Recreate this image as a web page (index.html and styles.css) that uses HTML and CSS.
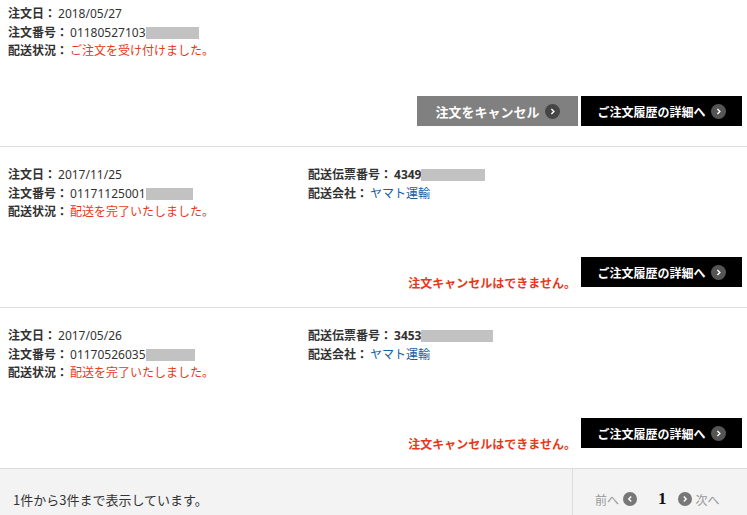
FILE: index.html
```html
<!DOCTYPE html>
<html lang="ja">
<head>
  <meta charset="UTF-8" />
  <meta name="viewport" content="width=device-width, initial-scale=1" />
  <title>ご注文履歴</title>
  <link rel="stylesheet" href="styles.css">
</head>
<body>
  <div class="orders">
    <div class="order order-first">
      <div class="order-info">
        <div class="info-col">
          <div class="info-row"><span class="label">注文日：</span><span class="value">2018/05/27</span></div>
          <div class="info-row"><span class="label">注文番号：</span><span class="value">01180527103</span><span class="mask mask-53"></span></div>
          <div class="info-row"><span class="label">配送状況：</span><span class="value status">ご注文を受け付けました。</span></div>
        </div>
      </div>
      <div class="order-actions">
        <a class="btn btn-cancel" href="#">注文をキャンセル
          <svg class="arrow" viewBox="0 0 15 15"><circle cx="7.5" cy="7.5" r="7.5"/><path d="M6.4 5 8.9 7.5 6.4 10"/></svg>
        </a>
        <a class="btn btn-detail" href="#">ご注文履歴の詳細へ
          <svg class="arrow" viewBox="0 0 15 15"><circle cx="7.5" cy="7.5" r="7.5"/><path d="M6.4 5 8.9 7.5 6.4 10"/></svg>
        </a>
      </div>
    </div>

    <div class="order">
      <div class="order-info">
        <div class="info-col">
          <div class="info-row"><span class="label">注文日：</span><span class="value">2017/11/25</span></div>
          <div class="info-row"><span class="label">注文番号：</span><span class="value">01171125001</span><span class="mask mask-47"></span></div>
          <div class="info-row"><span class="label">配送状況：</span><span class="value status">配送を完了いたしました。</span></div>
        </div>
        <div class="info-col">
          <div class="info-row"><span class="label">配送伝票番号：</span><span class="value strong">4349</span><span class="mask mask-64"></span></div>
          <div class="info-row"><span class="label">配送会社：</span><a class="value carrier" href="#">ヤマト運輸</a></div>
        </div>
      </div>
      <div class="order-actions">
        <p class="cancel-note">注文キャンセルはできません。</p>
        <a class="btn btn-detail" href="#">ご注文履歴の詳細へ
          <svg class="arrow" viewBox="0 0 15 15"><circle cx="7.5" cy="7.5" r="7.5"/><path d="M6.4 5 8.9 7.5 6.4 10"/></svg>
        </a>
      </div>
    </div>

    <div class="order">
      <div class="order-info">
        <div class="info-col">
          <div class="info-row"><span class="label">注文日：</span><span class="value">2017/05/26</span></div>
          <div class="info-row"><span class="label">注文番号：</span><span class="value">01170526035</span><span class="mask mask-49"></span></div>
          <div class="info-row"><span class="label">配送状況：</span><span class="value status">配送を完了いたしました。</span></div>
        </div>
        <div class="info-col">
          <div class="info-row"><span class="label">配送伝票番号：</span><span class="value strong">3453</span><span class="mask mask-72"></span></div>
          <div class="info-row"><span class="label">配送会社：</span><a class="value carrier" href="#">ヤマト運輸</a></div>
        </div>
      </div>
      <div class="order-actions">
        <p class="cancel-note">注文キャンセルはできません。</p>
        <a class="btn btn-detail" href="#">ご注文履歴の詳細へ
          <svg class="arrow" viewBox="0 0 15 15"><circle cx="7.5" cy="7.5" r="7.5"/><path d="M6.4 5 8.9 7.5 6.4 10"/></svg>
        </a>
      </div>
    </div>
  </div>

  <div class="pager-bar">
    <div class="pager-count">1件から3件まで表示しています。</div>
    <div class="pager-nav">
      <span class="pager-link">前へ</span>
      <svg class="pager-arrow" viewBox="0 0 14 14"><circle cx="7" cy="7" r="7"/><path d="M8.2 4.6 5.8 7 8.2 9.4"/></svg>
      <span class="pager-current">1</span>
      <svg class="pager-arrow" viewBox="0 0 14 14"><circle cx="7" cy="7" r="7"/><path d="M5.8 4.6 8.2 7 5.8 9.4"/></svg>
      <span class="pager-link">次へ</span>
    </div>
  </div>
</body>
</html>
```

FILE: styles.css
```css
body {
  margin: 0;
  font-family: "Noto Sans", "Noto Sans CJK JP", sans-serif;
  font-size: 12px;
  color: #333;
  background-color: #fff;
  overflow: hidden;
}

.order {
  border-bottom: 1px solid #ddd;
  padding: 19px 5px 20px 8px;
}

/* the list is scrolled a little, so the first row is cut at the top */
.order-first {
  margin-top: -14px;
}

.order-info {
  display: grid;
  grid-template-columns: 300px auto;
  height: 53px;
}

.info-row {
  display: flex;
  align-items: center;
  line-height: 18.5px;
  white-space: nowrap;
}

.label {
  font-weight: bold;
}

.value {
  margin-left: 2px;
}

.value.strong {
  font-weight: bold;
}

.status {
  color: #e8381a;
}

.carrier {
  color: #17609f;
  text-decoration: none;
}

.mask {
  display: inline-block;
  height: 12px;
  background-color: #c2c2c2;
}

.mask-47 { width: 47px; }
.mask-49 { width: 49px; }
.mask-53 { width: 53px; }
.mask-64 { width: 64px; }
.mask-72 { width: 72px; }

.order-actions {
  display: flex;
  justify-content: flex-end;
  align-items: flex-end;
  gap: 3px;
  margin-top: 38px;
}

.btn {
  display: flex;
  justify-content: center;
  align-items: center;
  gap: 5px;
  width: 161px;
  height: 30px;
  color: #fff;
  font-weight: bold;
  text-decoration: none;
  font-family: "Noto Sans CJK JP", sans-serif;
}

.btn-cancel {
  background-color: #808080;
  font-size: 13px;
}

.btn-cancel .arrow circle {
  fill: #454545;
}

.btn-detail {
  background-color: #000;
  font-size: 12px;
}

.btn-detail .arrow circle {
  fill: #555;
}

.arrow {
  width: 15px;
  height: 15px;
  flex-shrink: 0;
}

.arrow path,
.pager-arrow path {
  fill: none;
  stroke: #fff;
  stroke-width: 1.4;
}

.cancel-note {
  margin: 0 2px -3px 0;
  color: #e8381a;
  font-weight: bold;
  font-size: 12px;
  line-height: 14px;
  font-family: "Noto Sans CJK JP", sans-serif;
}

.pager-bar {
  display: flex;
  height: 60px;
  background-color: #f3f3f3;
}

.pager-count {
  flex: 1;
  padding: 22px 0 0 13px;
  line-height: 18px;
  font-size: 13px;
  font-family: "Noto Sans CJK JP", sans-serif;
}

.pager-nav {
  display: flex;
  align-items: center;
  align-self: flex-start;
  width: 152px;
  height: 18px;
  padding: 21px 0 21px 22px;
  border-left: 1px solid #ddd;
}

.pager-link {
  color: #999;
  font-family: "Noto Sans CJK JP", sans-serif;
}

.pager-arrow {
  width: 14px;
  height: 14px;
  margin: 0 4px;
}

.pager-arrow circle {
  fill: #777;
}

.pager-current {
  margin: 0 7px 0 17px;
  font-family: "Liberation Serif", serif;
  font-weight: bold;
  font-size: 17px;
  line-height: 18px;
  color: #111;
}
```
